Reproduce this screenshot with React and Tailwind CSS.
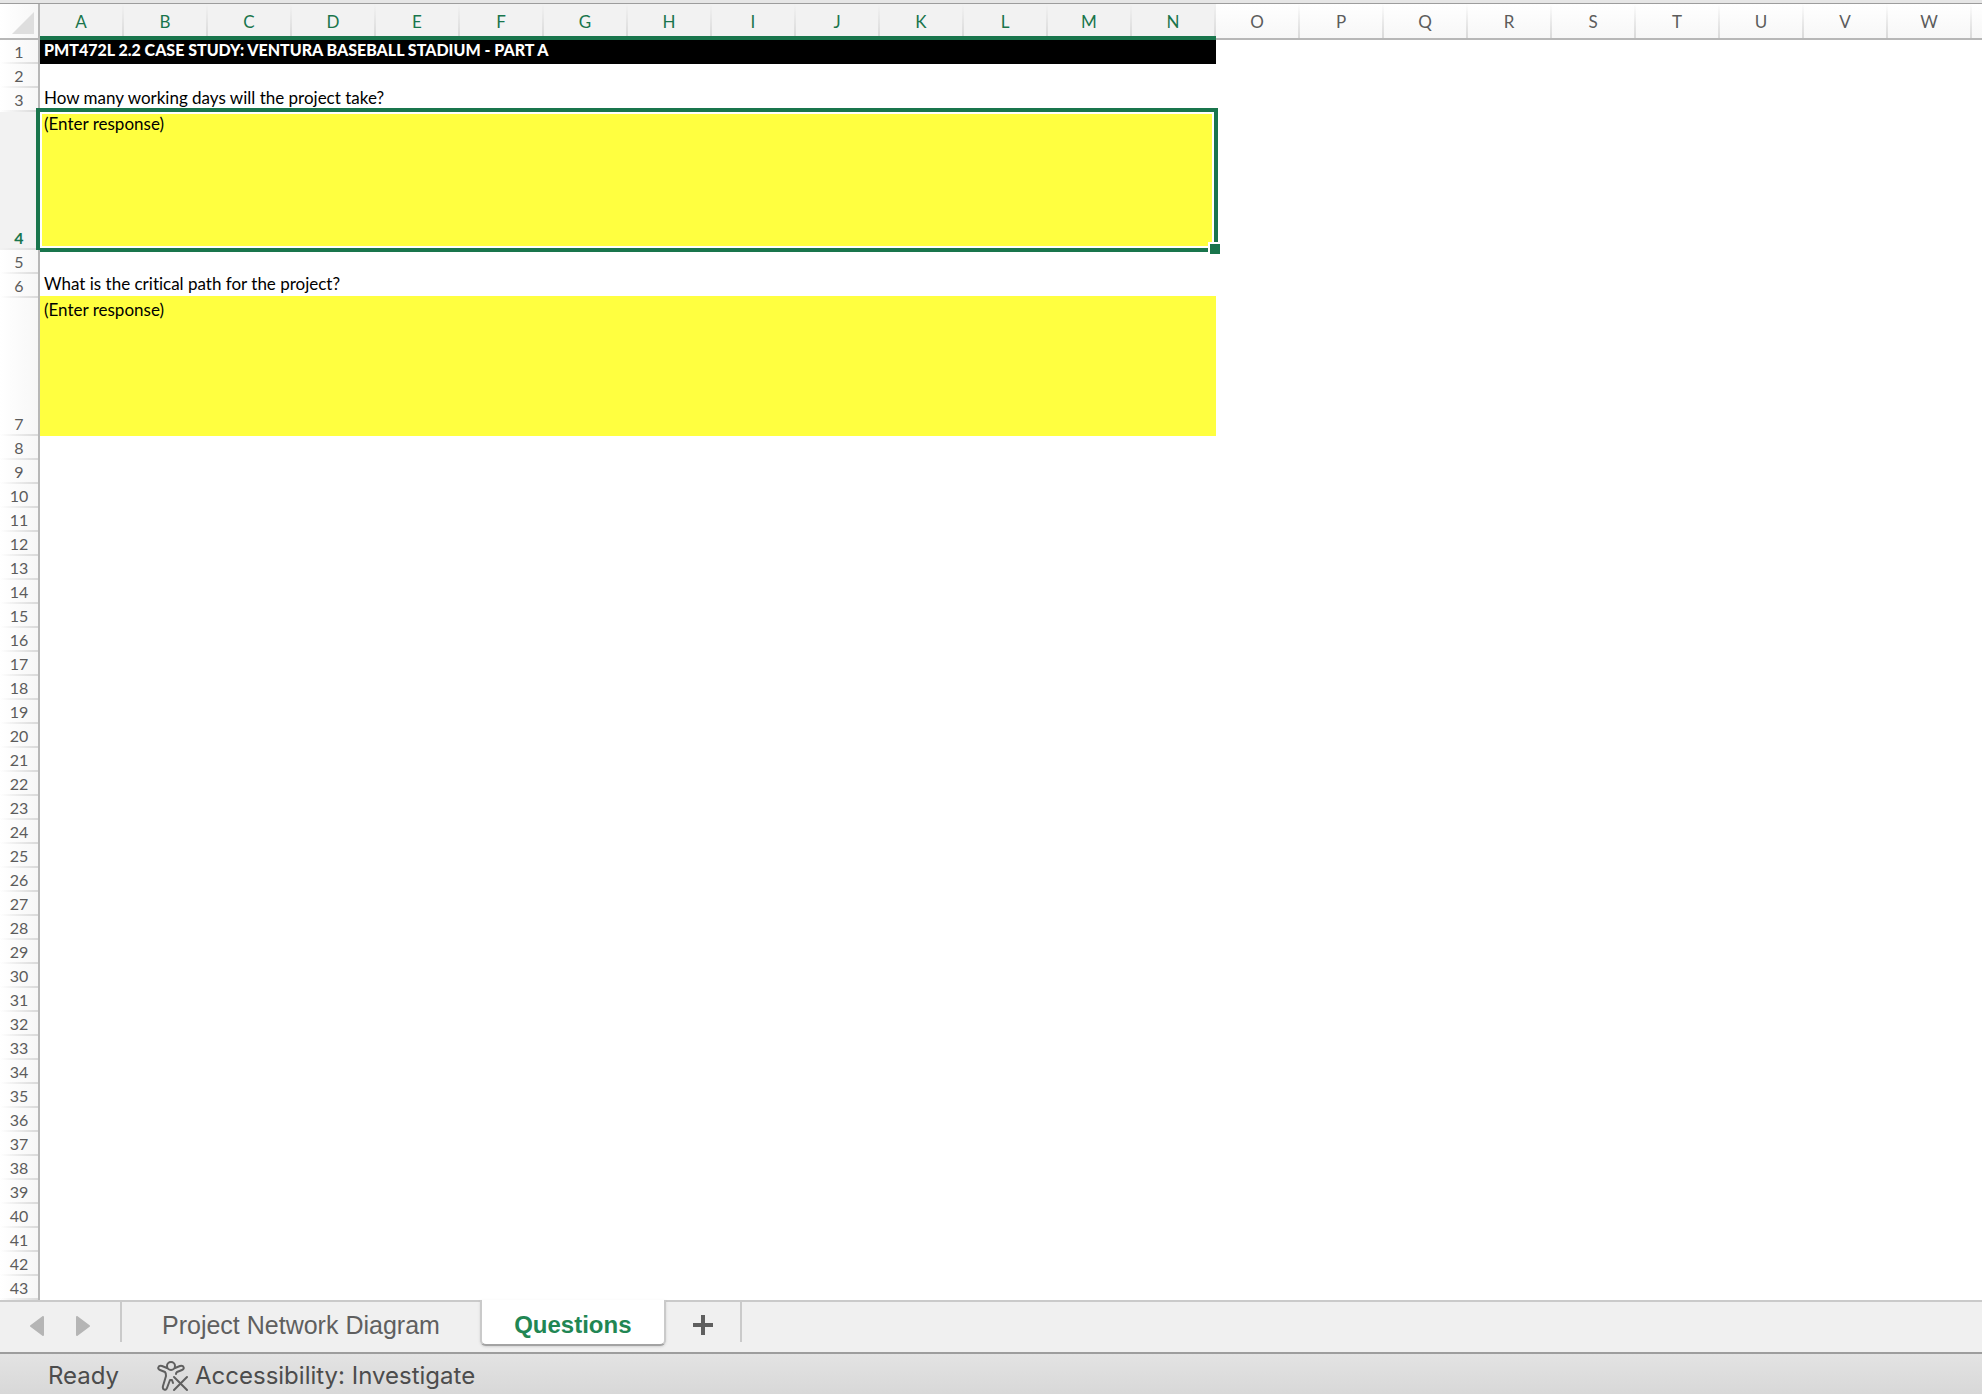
import React, { useState } from 'react';

const COLUMNS = 'ABCDEFGHIJKLMNOPQRSTUVW'.split('');
const MERGED = 14;

const ROWS = [
  { n: 1, kind: 'title', text: 'PMT472L 2.2 CASE STUDY: VENTURA BASEBALL STADIUM - PART A' },
  { n: 2 },
  { n: 3, kind: 'question', text: 'How many working days will the project take?' },
  { n: 4, kind: 'answer', labelledBy: 'cell-3' },
  { n: 5 },
  { n: 6, kind: 'question', text: 'What is the critical path for the project?' },
  { n: 7, kind: 'answer', labelledBy: 'cell-6' },
  ...Array.from({ length: 36 }, (_, i) => ({ n: i + 8 })),
];

const ColumnHeader = ({ letter, active }) => (
  <th
    scope="col"
    className={
      active
        ? 'relative border-b-4 border-[#19754c] bg-[#f2f2f2] pt-1 pr-0.5 text-[17px] leading-6 font-normal text-[#19754c]'
        : 'relative border-b-2 border-[#b7b7b7] bg-linear-to-b from-white to-[#f7f7f7] pt-0.5 pr-0.5 text-[17px] leading-6 font-normal text-[#5c5c5c]'
    }
  >
    {letter}
    <span className="absolute inset-y-0 right-0 w-0.5 bg-linear-to-b from-transparent to-[#dadada]" />
  </th>
);

const RowHeader = ({ n, active }) => (
  <th
    scope="row"
    className={
      active
        ? 'relative border-r-2 border-[#b7b7b7] bg-[#f2f2f2] p-0 align-bottom font-bold text-[#19754c]'
        : 'relative border-r-2 border-[#b7b7b7] bg-linear-to-r from-white to-[#f7f7f7] p-0 align-bottom font-normal text-[#5c5c5c]'
    }
  >
    <span className="block h-6 leading-6">{n}</span>
    <span className="absolute inset-x-0 bottom-0 h-0.5 bg-linear-to-r from-transparent to-[#dadada]" />
  </th>
);

const AnswerCell = ({ labelledBy, selected, onSelect }) => (
  <td colSpan={MERGED} className="relative p-0">
    <textarea
      aria-labelledby={labelledBy}
      defaultValue="(Enter response)"
      onFocus={onSelect}
      className="absolute inset-x-0 -top-0.5 bottom-0 resize-none bg-[#ffff40] px-1 py-0.5 text-[17px] leading-6 outline-none"
    />
    {selected && (
      <div className="pointer-events-none absolute -top-1 -right-0.5 -bottom-0.5 -left-1 border-4 border-[#19754c]">
        <div className="h-full border-2 border-white" />
        <div className="absolute -right-1.5 -bottom-1.5 size-3 border-t-2 border-l-2 border-white bg-[#19754c]" />
      </div>
    )}
  </td>
);

const Row = ({ row, selected, onSelect }) => (
  <tr className={row.kind === 'answer' ? 'h-[138px]' : 'h-6'}>
    <RowHeader n={row.n} active={selected} />
    {row.kind === 'title' && (
      <td colSpan={MERGED} className="bg-black px-1 py-0 font-black text-white">
        <span className="block h-6 leading-5">{row.text}</span>
      </td>
    )}
    {row.kind === 'question' && (
      <td colSpan={MERGED} id={`cell-${row.n}`} className="px-1 py-0 align-top text-[17px] leading-5">
        {row.text}
      </td>
    )}
    {row.kind === 'answer' && (
      <AnswerCell labelledBy={row.labelledBy} selected={selected} onSelect={onSelect} />
    )}
    {!row.kind && <td colSpan={MERGED} className="p-0" />}
    <td colSpan={COLUMNS.length - MERGED + 1} className="p-0" />
  </tr>
);

const Sheet = () => {
  const [selected, setSelected] = useState(4);

  return (
    <table className="w-full table-fixed border-separate border-spacing-0 font-['Lato',sans-serif] text-base text-black [font-variant-ligatures:none]">
      <colgroup>
        <col className="w-10" />
        {COLUMNS.map((c) => (
          <col key={c} className="w-[84px]" />
        ))}
        <col />
      </colgroup>
      <thead>
        <tr className="h-9">
          <td className="border-r-2 border-b-2 border-[#b7b7b7] bg-linear-to-r from-white to-[#f7f7f7] p-0">
            <button aria-label="Select all" className="flex h-[34px] w-full items-end justify-end px-1 pb-1">
              <svg width="22" height="22" viewBox="0 0 22 22">
                <path d="M22 0V22H0Z" fill="#dedede" />
              </svg>
            </button>
          </td>
          {COLUMNS.map((c, i) => (
            <ColumnHeader key={c} letter={c} active={i < MERGED} />
          ))}
          <td className="border-b-2 border-[#b7b7b7] bg-linear-to-b from-white to-[#f7f7f7] p-0" />
        </tr>
      </thead>
      <tbody>
        {ROWS.map((row) => (
          <Row key={row.n} row={row} selected={row.n === selected} onSelect={() => setSelected(row.n)} />
        ))}
      </tbody>
    </table>
  );
};

const TabBar = () => (
  <nav className="flex h-[54px] items-start border-y-2 border-t-[#cacaca] border-b-[#9d9d9d] bg-[#f0f0f0] font-['Liberation_Sans',sans-serif] text-2xl text-[#5f5f5f]">
    <div className="flex h-10 w-[122px] items-center gap-8 border-r-2 border-[#cacaca] pt-2 pl-[30px]">
      <button aria-label="Previous sheet">
        <svg width="14" height="20" viewBox="0 0 14 20" fill="#b5b5b5" stroke="#b5b5b5" strokeWidth="2" strokeLinejoin="round">
          <path d="M13 1V19L1 10Z" />
        </svg>
      </button>
      <button aria-label="Next sheet">
        <svg width="14" height="20" viewBox="0 0 14 20" fill="#b5b5b5" stroke="#b5b5b5" strokeWidth="2" strokeLinejoin="round">
          <path d="M1 1V19L13 10Z" />
        </svg>
      </button>
    </div>
    <button className="h-12 px-10 text-[25px]">Project Network Diagram</button>
    <button className="-mt-0.5 h-[46px] w-[186px] rounded-b-md border-x-2 border-b-2 border-x-[#cacaca] border-b-[#a3a3a3] bg-white pt-1.5 font-bold text-[#218653] shadow-sm">
      Questions
    </button>
    <button aria-label="Add sheet" className="flex h-10 w-[76px] items-center justify-center border-r-2 border-[#cacaca] pt-1.5">
      <svg width="20" height="20" viewBox="0 0 20 20" stroke="#5f5f5f" strokeWidth="4">
        <path d="M10 0V20M0 10H20" />
      </svg>
    </button>
  </nav>
);

const AccessibilityIcon = () => (
  <svg width="32" height="32" viewBox="0 0 32 32" fill="none" stroke="#5f5f5f" strokeWidth="2" strokeLinecap="round" strokeLinejoin="round">
    <circle cx="14" cy="6" r="4" />
    <path d="M10 8L5 6C1 5 0 9 3 10L8 12C9 13 9 14 9 16L6 26C5 30 9 31 10 28L13 20H15L16 23" />
    <path d="M18 8L23 6C27 5 28 9 25 10L20 12C19 13 19 13 19 14" />
    <path d="M17 17L30 30M30 17L17 30" />
  </svg>
);

const StatusBar = () => (
  <footer className="flex h-10 items-center bg-linear-to-b from-[#e3e3e3] to-[#d8d8d8] pt-1 pl-12 font-['Inter',sans-serif] text-2xl text-[#4c4c4c]">
    <span className="w-[109px]">Ready</span>
    <button className="flex items-center gap-1.5">
      <AccessibilityIcon />
      Accessibility: Investigate
    </button>
  </footer>
);

const App = () => (
  <div className="min-h-screen overflow-hidden bg-white">
    <div className="h-1 border-b border-[#9d9d9d] bg-[#e6e6e6]" />
    <Sheet />
    <TabBar />
    <StatusBar />
  </div>
);

export default App;
